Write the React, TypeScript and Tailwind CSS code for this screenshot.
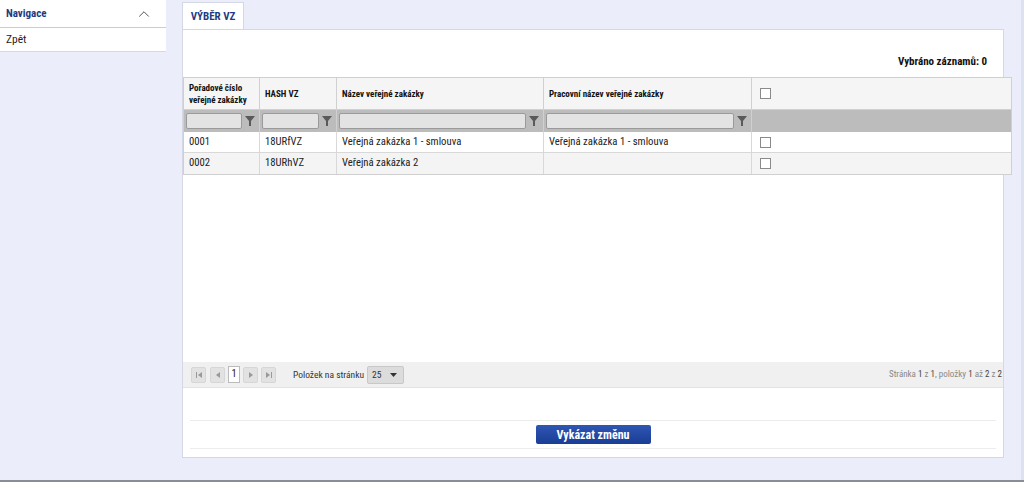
import { ChevronUp } from 'lucide-react';

function Filter({ w }: { w: string }) {
  return (
    <div className="flex items-center gap-[2px] px-[2px]">
      <div className={`h-[16px] ${w} rounded-[2px] border border-[#9a9a9a] bg-[#e3e3e3]`} />
      <svg width="12" height="12" viewBox="0 0 12 12" className="shrink-0">
        <path d="M1 1 H11 L7 6 V11 H5 V6 Z" fill="#5a5a5a" />
      </svg>
    </div>
  );
}

function Box() {
  return <div className="h-[11px] w-[11px] border border-[#8a8a8a] bg-white" />;
}

function PageBtn({ children, cls = '' }: { children: React.ReactNode; cls?: string }) {
  return (
    <div className={`flex h-[16px] w-[15px] items-center justify-center rounded-[2px] border border-[#d6d6d6] bg-[#e2e2e2] ${cls}`}>
      {children}
    </div>
  );
}

const rows = [
  { a: '0001', b: '18URfVZ', c: 'Veřejná zakázka 1 - smlouva', d: 'Veřejná zakázka 1 - smlouva' },
  { a: '0002', b: '18URhVZ', c: 'Veřejná zakázka 2', d: '' },
];

const cols = 'grid grid-cols-[76px_77px_207px_208px_261px]';

export default function App() {
  return (
    <div style={{ fontFamily: 'Roboto, sans-serif' }} className="h-[482px] w-[1024px] overflow-hidden bg-[#ebeefa] font-stretch-condensed leading-none text-[#222]">
      <div className="flex h-[480px] border-r-[3px] border-[#dde2f3]">
        {/* Sidebar */}
        <div className="w-[166px] shrink-0">
          <div className="flex h-[28px] items-center justify-between border-b border-[#c9cdd8] bg-white pl-[6px] pr-[13px]">
            <span className="text-[11px] font-bold text-[#1d3b84]">Navigace</span>
            <ChevronUp className="h-[18px] w-[18px] text-[#444]" strokeWidth={1.2} />
          </div>
          <div className="flex h-[24px] items-center border-b border-[#d5d9e3] bg-white pl-[6px] text-[11.5px] text-[#222]">
            Zpět
          </div>
        </div>

        {/* Main */}
        <div className="ml-[16px] w-[822px] pt-[2px]">
          <div className="flex">
            <div className="flex h-[27px] w-[62px] items-center justify-center border border-b-0 border-[#d4d8e4] bg-white text-[11px] font-bold text-[#1d3b84]">
              VÝBĚR VZ
            </div>
          </div>
          <div className="h-[429px] border border-[#d4d8e4] bg-white">
            <div className="flex h-[47px] items-end justify-end pb-[10px] pr-[16px] text-[11px] font-bold text-[#111]">
              Vybráno záznamů: 0
            </div>

            {/* Table */}
            <div className="w-[829px] border border-[#d0d0d0] text-[10.7px]">
              <div className={`${cols} h-[32px] border-b border-[#d0d0d0] bg-[#f5f5f5] text-[9px] font-bold leading-[12px] text-[#111]`}>
                <div className="flex items-center border-r border-[#d0d0d0] px-[5px]">Pořadové číslo veřejné zakázky</div>
                <div className="flex items-center border-r border-[#d0d0d0] px-[5px]">HASH VZ</div>
                <div className="flex items-center border-r border-[#d0d0d0] px-[5px]">Název veřejné zakázky</div>
                <div className="flex items-center border-r border-[#d0d0d0] px-[5px]">Pracovní název veřejné zakázky</div>
                <div className="flex items-center px-[8px]"><Box /></div>
              </div>
              <div className={`${cols} h-[22px] bg-[#bcbcbc]`}>
                <div className="flex items-center border-r border-[#d0d0d0]"><Filter w="w-[56px]" /></div>
                <div className="flex items-center border-r border-[#d0d0d0]"><Filter w="w-[57px]" /></div>
                <div className="flex items-center border-r border-[#d0d0d0]"><Filter w="w-[187px]" /></div>
                <div className="flex items-center border-r border-[#d0d0d0]"><Filter w="w-[188px]" /></div>
                <div />
              </div>
              {rows.map((r, i) => (
                <div key={r.a} className={`${cols} h-[21px] ${i === 0 ? 'border-b border-[#d8d8d8] bg-white' : 'bg-[#f4f4f4]'}`}>
                  <div className="flex items-center border-r border-[#d8d8d8] px-[5px]">{r.a}</div>
                  <div className="flex items-center border-r border-[#d8d8d8] px-[5px]">{r.b}</div>
                  <div className="flex items-center border-r border-[#d8d8d8] px-[5px]">{r.c}</div>
                  <div className="flex items-center border-r border-[#d8d8d8] px-[5px]">{r.d}</div>
                  <div className="flex items-center px-[8px]"><Box /></div>
                </div>
              ))}
            </div>

            {/* Pager */}
            <div className="mt-[187px] flex h-[26px] items-center justify-between border-b border-[#e2e2e2] bg-[#f0f0f0] pl-[8px] pr-[1px] text-[9.5px] text-[#333]">
              <div className="flex items-center">
                <PageBtn>
                  <svg width="8" height="8" viewBox="0 0 8 8"><path d="M1.5 1V7" stroke="#999" /><path d="M7 1L3 4L7 7Z" fill="#999" /></svg>
                </PageBtn>
                <PageBtn cls="ml-[4px]">
                  <svg width="8" height="8" viewBox="0 0 8 8"><path d="M6 1L2 4L6 7Z" fill="#999" /></svg>
                </PageBtn>
                <div className="ml-[3px] flex h-[17px] w-[12px] items-center justify-center border border-[#bbb] bg-white text-[10.5px] text-[#222]">1</div>
                <PageBtn cls="ml-[3px]">
                  <svg width="8" height="8" viewBox="0 0 8 8"><path d="M2 1L6 4L2 7Z" fill="#999" /></svg>
                </PageBtn>
                <PageBtn cls="ml-[3px]">
                  <svg width="8" height="8" viewBox="0 0 8 8"><path d="M1 1L5 4L1 7Z" fill="#999" /><path d="M6.5 1V7" stroke="#999" /></svg>
                </PageBtn>
                <span className="ml-[17px]">Položek na stránku</span>
                <div className="ml-[3px] flex h-[18px] w-[37px] items-center justify-between rounded-[2px] border border-[#c8c8c8] bg-[#dcdcdc] pl-[4px] pr-[6px]">
                  <span>25</span>
                  <svg width="7" height="4" viewBox="0 0 7 4"><path d="M0 0H7L3.5 4Z" fill="#333" /></svg>
                </div>
              </div>
              <div className="text-[9px] text-[#888]">
                Stránka <span className="text-[#444]">1</span> z <span className="text-[#444]">1</span>, položky <span className="text-[#444]">1</span> až <span className="text-[#444]">2</span> z <span className="text-[#444]">2</span>
              </div>
            </div>

            {/* Footer */}
            <div className="mx-[7px] mt-[32px] flex justify-center border-y border-[#ececec] py-[4px]">
              <button className="flex h-[19px] w-[115px] items-center justify-center rounded-[2px] bg-gradient-to-b from-[#2e56b3] to-[#1a3d95] text-[12px] font-bold text-white">
                Vykázat změnu
              </button>
            </div>
          </div>
        </div>
      </div>
      <div className="h-[2px] bg-[#8a8d96]" />
    </div>
  );
}
